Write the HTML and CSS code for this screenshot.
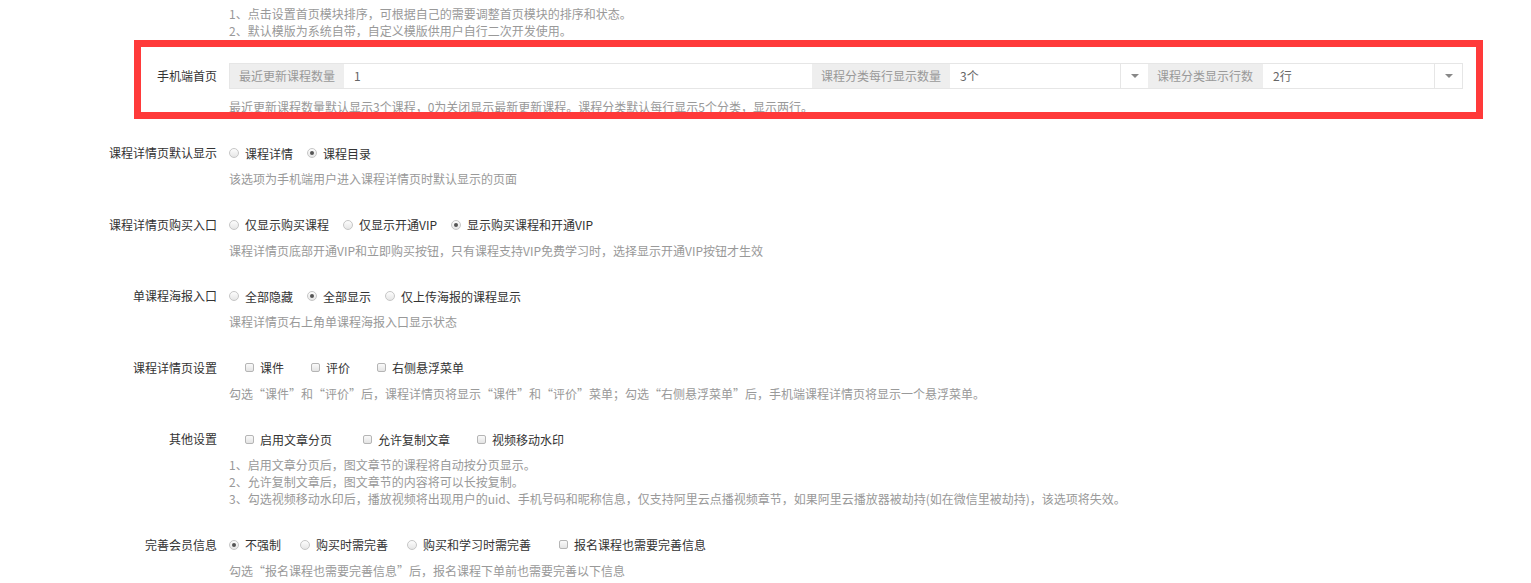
FILE: index.html
```html
<!DOCTYPE html>
<html lang="zh-CN">
<head>
<meta charset="utf-8">
<title>设置</title>
<link rel="stylesheet" href="styles.css">
</head>
<body>
<div class="page">
  <div class="top-tips">
    <p>1、点击设置首页模块排序，可根据自己的需要调整首页模块的排序和状态。</p>
    <p>2、默认模版为系统自带，自定义模版供用户自行二次开发使用。</p>
  </div>

  <div class="form-row form-row--first">
    <div class="form-label form-label--input">手机端首页</div>
    <div class="form-field">
      <div class="input-group">
        <span class="addon">最近更新课程数量</span>
        <span class="control">1</span>
        <span class="addon">课程分类每行显示数量</span>
        <span class="select"><span class="select-value">3个</span><span class="caret-box"><span class="caret"></span></span></span>
        <span class="addon">课程分类显示行数</span>
        <span class="select"><span class="select-value">2行</span><span class="caret-box"><span class="caret"></span></span></span>
      </div>
      <div class="help help--first">最近更新课程数量默认显示3个课程，0为关闭显示最新更新课程。课程分类默认每行显示5个分类，显示两行。</div>
    </div>
    <div class="highlight"></div>
  </div>

  <div class="form-row">
    <div class="form-label">课程详情页默认显示</div>
    <div class="form-field">
      <div class="options">
        <span class="opt"><span class="radio"></span>课程详情</span>
        <span class="opt"><span class="radio is-checked"></span>课程目录</span>
      </div>
      <div class="help">该选项为手机端用户进入课程详情页时默认显示的页面</div>
    </div>
  </div>

  <div class="form-row">
    <div class="form-label">课程详情页购买入口</div>
    <div class="form-field">
      <div class="options">
        <span class="opt"><span class="radio"></span>仅显示购买课程</span>
        <span class="opt"><span class="radio"></span>仅显示开通VIP</span>
        <span class="opt"><span class="radio is-checked"></span>显示购买课程和开通VIP</span>
      </div>
      <div class="help">课程详情页底部开通VIP和立即购买按钮，只有课程支持VIP免费学习时，选择显示开通VIP按钮才生效</div>
    </div>
  </div>

  <div class="form-row">
    <div class="form-label">单课程海报入口</div>
    <div class="form-field">
      <div class="options">
        <span class="opt"><span class="radio"></span>全部隐藏</span>
        <span class="opt"><span class="radio is-checked"></span>全部显示</span>
        <span class="opt"><span class="radio"></span>仅上传海报的课程显示</span>
      </div>
      <div class="help">课程详情页右上角单课程海报入口显示状态</div>
    </div>
  </div>

  <div class="form-row">
    <div class="form-label">课程详情页设置</div>
    <div class="form-field">
      <div class="options options--check">
        <span class="chk-opt"><span class="checkbox"></span>课件</span>
        <span class="chk-opt"><span class="checkbox"></span>评价</span>
        <span class="chk-opt"><span class="checkbox"></span>右侧悬浮菜单</span>
      </div>
      <div class="help">勾选“课件”和“评价”后，课程详情页将显示“课件”和“评价”菜单；勾选“右侧悬浮菜单”后，手机端课程详情页将显示一个悬浮菜单。</div>
    </div>
  </div>

  <div class="form-row">
    <div class="form-label">其他设置</div>
    <div class="form-field">
      <div class="options options--check">
        <span class="chk-opt chk-opt--wide"><span class="checkbox"></span>启用文章分页</span>
        <span class="chk-opt"><span class="checkbox"></span>允许复制文章</span>
        <span class="chk-opt"><span class="checkbox"></span>视频移动水印</span>
      </div>
      <div class="help">
        <p>1、启用文章分页后，图文章节的课程将自动按分页显示。</p>
        <p>2、允许复制文章后，图文章节的内容将可以长按复制。</p>
        <p>3、勾选视频移动水印后，播放视频将出现用户的uid、手机号码和昵称信息，仅支持阿里云点播视频章节，如果阿里云播放器被劫持(如在微信里被劫持)，该选项将失效。</p>
      </div>
    </div>
  </div>

  <div class="form-row">
    <div class="form-label">完善会员信息</div>
    <div class="form-field">
      <div class="options options--member">
        <span class="opt"><span class="radio is-checked"></span>不强制</span>
        <span class="opt"><span class="radio"></span>购买时需完善</span>
        <span class="opt"><span class="radio"></span>购买和学习时需完善</span>
        <span class="chk-opt chk-opt--member"><span class="checkbox"></span>报名课程也需要完善信息</span>
      </div>
      <div class="help">勾选“报名课程也需要完善信息”后，报名课程下单前也需要完善以下信息</div>
    </div>
  </div>
</div>
</body>
</html>
```

FILE: styles.css
```css
* {
  box-sizing: border-box;
}

html, body {
  margin: 0;
  padding: 0;
  background: #fff;
}

body {
  font-family: "Noto Sans CJK SC", "Noto Sans", "Liberation Sans", sans-serif;
  font-size: 12px;
  color: #333;
}

p {
  margin: 0;
}

.page {
  width: 1531px;
}

.top-tips {
  margin-left: 229px;
  padding-top: 5px;
  line-height: 17px;
  color: #999;
}

.form-row {
  display: grid;
  grid-template-columns: 217px 1fr;
  column-gap: 12px;
  margin-bottom: 27.5px;
}

.form-row--first {
  position: relative;
  padding-top: 24px;
  padding-right: 68px;
  margin-bottom: 28px;
}

.form-label {
  text-align: right;
  line-height: 20px;
  white-space: nowrap;
  color: #333;
}

.form-label--input {
  line-height: 26px;
}

.form-field {
  min-width: 0;
}

.help {
  margin-top: 7px;
  line-height: 17px;
  color: #999;
  white-space: nowrap;
}

.help--first {
  margin-top: 9px;
}

/* input group */
.input-group {
  display: grid;
  grid-template-columns: 114px 1fr 138px 198px 115px 199px;
  height: 26px;
  border: 1px solid #e6e6e6;
}

.addon {
  background: #eee;
  color: #999;
  line-height: 24px;
  padding: 0 9px;
  white-space: nowrap;
  overflow: hidden;
}

.control {
  line-height: 24px;
  padding: 0 10px;
  color: #666;
}

.select {
  display: flex;
  align-items: stretch;
}

.select-value {
  flex: 1;
  line-height: 24px;
  padding: 0 10px;
  color: #666;
}

.caret-box {
  width: 28px;
  border-left: 1px solid #e6e6e6;
  display: flex;
  align-items: center;
  justify-content: center;
}

.caret {
  width: 0;
  height: 0;
  border-left: 4px solid transparent;
  border-right: 4px solid transparent;
  border-top: 4px solid #888;
}

.highlight {
  position: absolute;
  left: 134px;
  top: 1px;
  width: 1349px;
  height: 79px;
  border: 7px solid #ff3a3a;
  pointer-events: none;
}

/* options */
.options {
  display: flex;
  align-items: center;
  height: 20px;
  white-space: nowrap;
}

.opt {
  display: inline-flex;
  align-items: center;
  margin-right: 14px;
}

.options--member .opt {
  margin-right: 19px;
}

.radio {
  width: 10px;
  height: 10px;
  border-radius: 50%;
  border: 1px solid #c6c6c6;
  background: linear-gradient(#fdfdfd, #e6e6e6);
  margin-right: 6px;
  position: relative;
  flex: none;
}

.radio.is-checked::after {
  content: "";
  position: absolute;
  left: 2px;
  top: 2px;
  width: 4px;
  height: 4px;
  border-radius: 50%;
  background: #555;
}

.options--check {
  padding-left: 16px;
}

.chk-opt {
  display: inline-flex;
  align-items: center;
  margin-right: 27px;
}

.chk-opt--wide {
  margin-right: 31px;
}

.chk-opt--member {
  margin-left: 9px;
}

.checkbox {
  width: 9px;
  height: 9px;
  border: 1px solid #b5b5b5;
  border-radius: 2px;
  background: linear-gradient(#fafafa, #e4e4e4);
  margin-right: 6px;
  flex: none;
}
```
